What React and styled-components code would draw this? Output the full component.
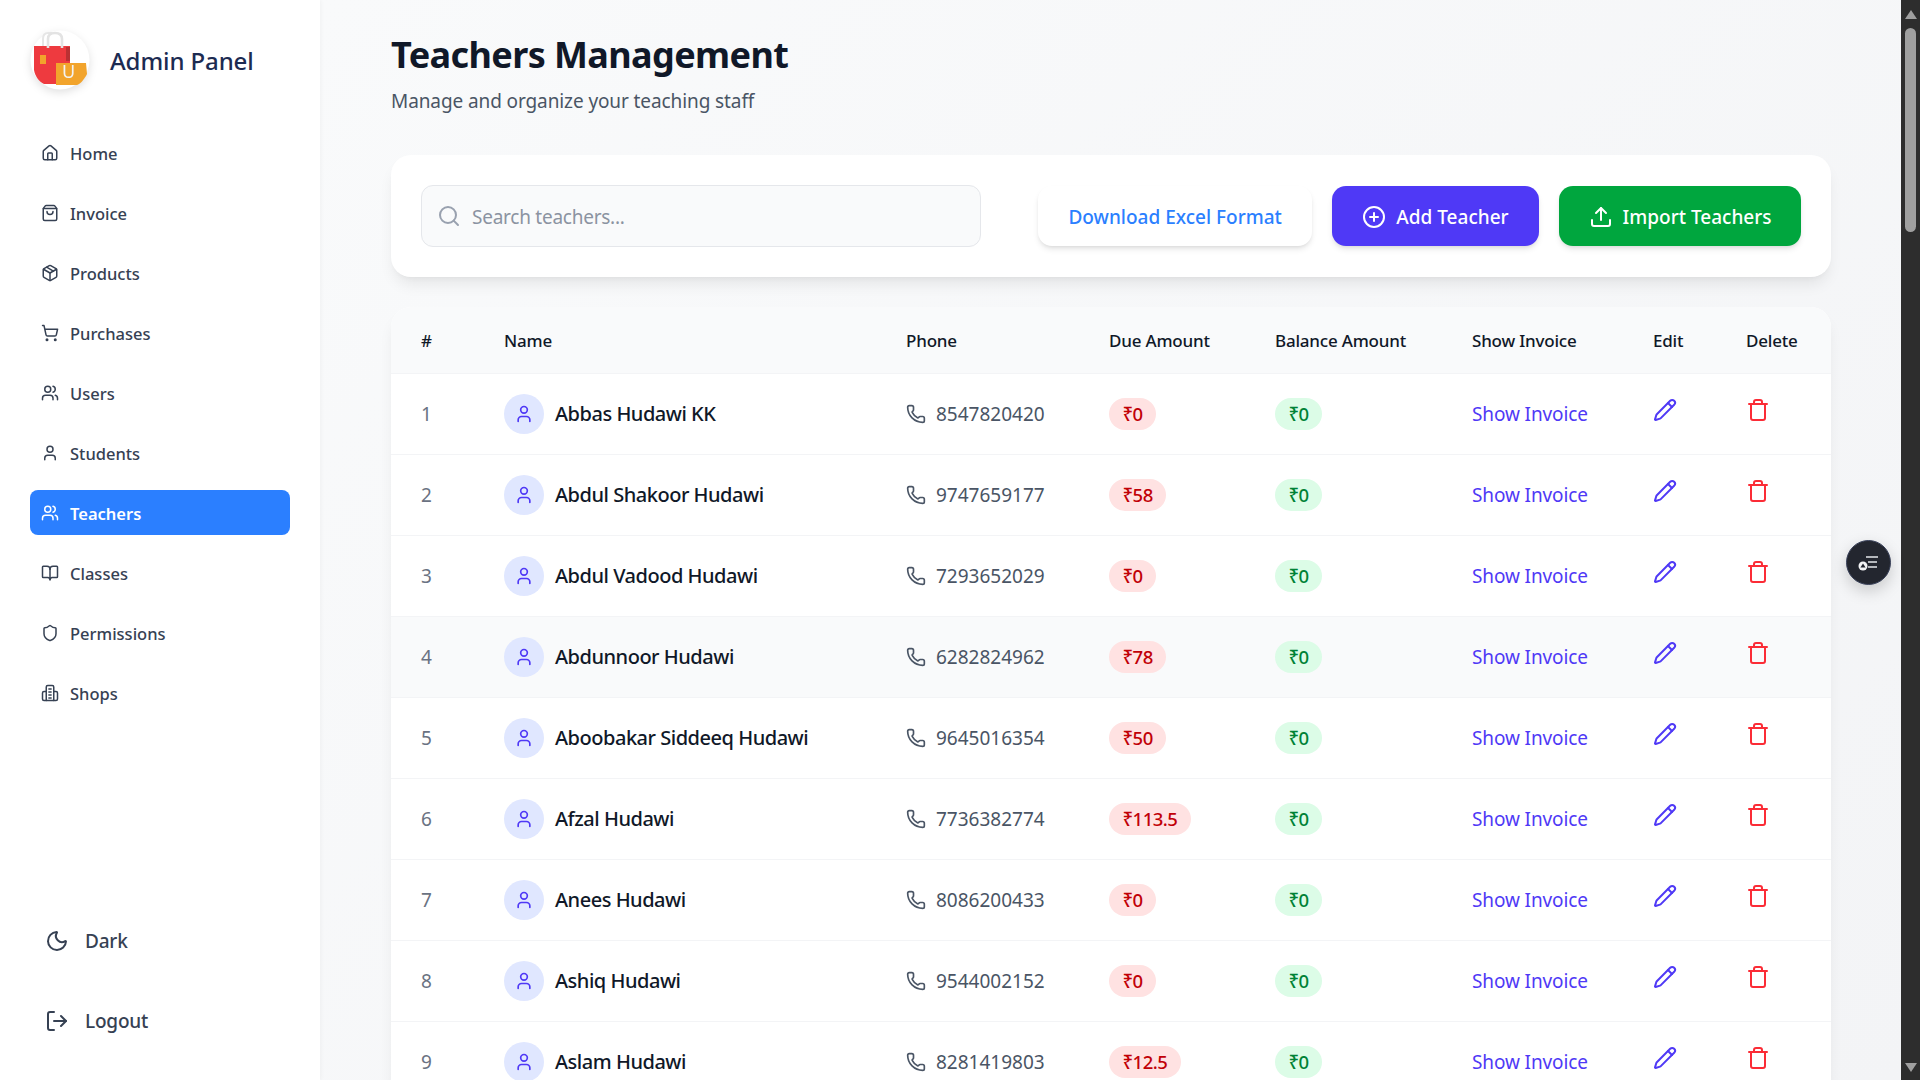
import React from 'react';
import styled, { createGlobalStyle } from 'styled-components';
import {
  House, ShoppingBag, Package, ShoppingCart, Users, User, BookOpen, Shield,
  Moon, LogOut, Search, CirclePlus, Upload, Phone, Pencil, Trash,
} from 'lucide-react';

const FONT = '"Noto Sans", "Open Sans", "DejaVu Sans", sans-serif';

const GlobalStyle = createGlobalStyle`
  html, body { margin: 0; padding: 0; height: 100%; overflow: hidden; }
  body { font-family: ${FONT}; color: #101828; background: #f9fafb; }
  * { box-sizing: border-box; }
`;

const Shell = styled.div`
  display: flex;
  width: 100vw;
  height: 100vh;
  overflow: hidden;
`;

const Sidebar = styled.aside`
  flex: 0 0 320px;
  display: flex;
  flex-direction: column;
  background: #fff;
  box-shadow: 1px 0 4px rgba(0, 0, 0, 0.04);
  z-index: 1;
`;

const Brand = styled.div`
  display: flex;
  align-items: center;
  gap: 20px;
  padding: 30px 30px 40px;
`;

const BrandTitle = styled.span`
  padding-top: 1px;
  font-size: 24px;
  font-weight: 500;
  letter-spacing: -0.1px;
  color: #1c2b52;
`;

const NavList = styled.nav`
  display: flex;
  flex-direction: column;
  gap: 15px;
  padding: 0 30px;
`;

const NavItem = styled.a`
  display: flex;
  align-items: center;
  gap: 11px;
  height: 45px;
  padding: 1px 11px 0;
  border-radius: 8px;
  font-size: 16.5px;
  font-weight: ${(p) => (p.$active ? 600 : 500)};
  color: ${(p) => (p.$active ? '#fff' : '#364153')};
  background: ${(p) => (p.$active ? '#2b7fff' : 'transparent')};
`;

const SideFooter = styled.div`
  margin-top: auto;
  display: flex;
  flex-direction: column;
  gap: 40px;
  padding: 0 45px 39px;
`;

const FooterItem = styled.a`
  display: flex;
  align-items: center;
  gap: 16px;
  height: 40px;
  font-size: 19px;
  font-weight: 500;
  letter-spacing: -0.2px;
  color: #364153;
`;

const Main = styled.main`
  flex: 1;
  min-width: 0;
  height: 100%;
  overflow: hidden;
  padding: 30px 70px 0 71px;
  background: linear-gradient(135deg, #f9fafb, #f3f4f6);
`;

const Title = styled.h1`
  margin: 0 0 8px;
  font-size: 36px;
  line-height: 50px;
  font-weight: 700;
  letter-spacing: -0.6px;
  color: #101828;
`;

const Subtitle = styled.p`
  margin: 0 0 41px;
  font-size: 19px;
  line-height: 26px;
  letter-spacing: -0.1px;
  color: #4a5565;
`;

const Toolbar = styled.section`
  display: flex;
  align-items: center;
  justify-content: space-between;
  height: 122px;
  padding: 0 30px;
  background: #fff;
  border-radius: 20px;
  box-shadow: 0 10px 15px -3px rgba(0, 0, 0, 0.08), 0 4px 6px -4px rgba(0, 0, 0, 0.06);
`;

const SearchBox = styled.label`
  display: flex;
  align-items: center;
  gap: 11px;
  width: 560px;
  height: 62px;
  padding: 0 15px;
  background: #f9fafb;
  border: 1px solid #e5e7eb;
  border-radius: 12px;
  color: #99a1af;
`;

const SearchInput = styled.input`
  flex: 1;
  min-width: 0;
  padding: 2px 0 0;
  border: 0;
  outline: 0;
  background: transparent;
  font-family: ${FONT};
  font-size: 19px;
  letter-spacing: -0.25px;
  color: #101828;
  &::placeholder { color: #8b93a1; opacity: 1; }
`;

const Actions = styled.div`
  display: flex;
  gap: 20px;
`;

const ActionButton = styled.button`
  display: flex;
  align-items: center;
  gap: 10px;
  height: 60px;
  padding: 1px ${(p) => p.$pad || 30}px 0;
  border: 0;
  border-radius: 14px;
  font-family: ${FONT};
  font-size: 19px;
  font-weight: 500;
  color: ${(p) => p.$fg};
  background: ${(p) => p.$bg};
  box-shadow: 0 4px 6px -1px rgba(0, 0, 0, 0.1), 0 2px 4px -2px rgba(0, 0, 0, 0.1);
`;

const TableCard = styled.section`
  margin-top: 30px;
  background: #fff;
  border-radius: 20px 20px 0 0;
  box-shadow: 0 10px 15px -3px rgba(0, 0, 0, 0.08);
  overflow: hidden;
`;

const Table = styled.table`
  width: 100%;
  table-layout: fixed;
  border-collapse: collapse;
`;

const HeadRow = styled.tr`
  height: 66px;
  background: #f9fafb;
  border-bottom: 1px solid #f3f4f6;
`;

const HeadCell = styled.th`
  padding: 1px 0 0 30px;
  text-align: left;
  font-size: 17px;
  font-weight: 500;
  letter-spacing: -0.2px;
  white-space: nowrap;
  color: #101828;
`;

const BodyRow = styled.tr`
  height: 81px;
  border-bottom: 1px solid #f3f4f6;
  background: ${(p) => (p.$hover ? '#f9fafb' : '#fff')};
`;

const Cell = styled.td`
  padding: 0 0 0 30px;
  vertical-align: middle;
  white-space: nowrap;
  font-size: 19px;
  color: ${(p) => p.$fg || '#4a5565'};
`;

const NameWrap = styled.div`
  display: flex;
  align-items: center;
  gap: 11px;
  font-size: 20px;
  font-weight: 500;
  letter-spacing: -0.48px;
  color: #101828;
`;

const Avatar = styled.span`
  display: flex;
  align-items: center;
  justify-content: center;
  width: 40px;
  height: 40px;
  border-radius: 50%;
  background: #e0e7ff;
  color: #4f39f6;
`;

const PhoneWrap = styled.div`
  display: flex;
  align-items: center;
  gap: 10px;
`;

const Pill = styled.span`
  display: inline-block;
  height: 32px;
  padding: 0 13.5px;
  border-radius: 16px;
  font-size: 18.5px;
  line-height: 32px;
  font-weight: 500;
  letter-spacing: -0.5px;
  color: ${(p) => (p.$tone === 'red' ? '#c10007' : '#008236')};
  background: ${(p) => (p.$tone === 'red' ? '#ffe2e2' : '#dcfce7')};
`;

const InvoiceLink = styled.a`
  font-size: 19px;
  letter-spacing: -0.12px;
  color: #4f39f6;
`;

const IconAction = styled.span`
  display: block;
  width: 24px;
  height: 24px;
  margin-bottom: 8px;
  color: ${(p) => p.$fg};
`;

const ScrollTrack = styled.div`
  flex: 0 0 19px;
  display: flex;
  flex-direction: column;
  align-items: center;
  height: 100%;
  background: #2d2d2d;
`;

const ArrowUp = styled.span`
  width: 0;
  height: 0;
  margin-top: 10px;
  border-left: 6px solid transparent;
  border-right: 6px solid transparent;
  border-bottom: 9px solid #9f9f9f;
`;

const Thumb = styled.span`
  width: 11px;
  height: 204px;
  margin-top: 9px;
  border-radius: 6px;
  background: #9f9f9f;
`;

const ArrowDown = styled.span`
  width: 0;
  height: 0;
  margin-top: auto;
  margin-bottom: 8px;
  border-left: 6px solid transparent;
  border-right: 6px solid transparent;
  border-top: 9px solid #9f9f9f;
`;

const FloatButton = styled.button`
  position: fixed;
  top: 540px;
  right: 29px;
  display: flex;
  align-items: center;
  justify-content: center;
  width: 45px;
  height: 45px;
  padding: 0;
  border: 1px solid #39415a;
  border-radius: 50%;
  background: #23262f;
  box-shadow: 0 6px 16px rgba(0, 0, 0, 0.18);
  z-index: 3;
`;

const ShopsIcon = (props) => (
  <svg width="18" height="18" viewBox="0 0 24 24" fill="none" stroke="currentColor" strokeWidth="2" strokeLinecap="round" strokeLinejoin="round" {...props}>
    <path d="M7 22V4a2 2 0 0 1 2-2h6a2 2 0 0 1 2 2v18" />
    <path d="M7 10H4a2 2 0 0 0-2 2v8a2 2 0 0 0 2 2h16a2 2 0 0 0 2-2v-8a2 2 0 0 0-2-2h-3" />
    <path d="M10.5 6.5h3M10.5 10.5h3M10.5 14.5h3M10.5 18.5h3" />
  </svg>
);

const LogoMark = () => (
  <svg width="60" height="60" viewBox="0 0 60 60" style={{ filter: 'drop-shadow(0 3px 4px rgba(0,0,0,0.12))' }}>
    <circle cx="30" cy="30" r="29.5" fill="#fff" />
    <path d="M13 20 V9 Q13 3 18 3 H22" fill="none" stroke="#e6e6e6" strokeWidth="2" />
    <path d="M4 16 H40 V54 H14 C9 52 5 46 4 40 Z" fill="#ee3a3f" />
    <path d="M18 18 V9 Q18 3 25 3 Q32 3 32 9 V18" fill="none" stroke="#e3e3e3" strokeWidth="2.6" />
    <path d="M36 17 h4 v14 h-4 z" fill="#8f2a2a" opacity="0.55" />
    <path d="M10 25 h6 v9 h-6 z" fill="#f2a42c" />
    <path d="M26 33 H56 L57 44 C54 50 50 54 47 55 H26 Z" fill="#f2a42c" />
    <text x="38.5" y="48" textAnchor="middle" fontFamily={FONT} fontSize="18" fill="#f3f3f3">U</text>
  </svg>
);

const FloatGlyph = () => (
  <svg width="24" height="20" viewBox="0 0 24 20" fill="none">
    <path d="M9 4h12M11 9h9M11 14h9" stroke="#e5e7eb" strokeWidth="1.6" />
    <circle cx="6" cy="13" r="4.5" fill="#f3f4f6" />
    <path d="M6 10.6l2.6 4H3.4z" fill="#23262f" />
  </svg>
);

const navItems = [
  ['Home', House], ['Invoice', ShoppingBag], ['Products', Package], ['Purchases', ShoppingCart],
  ['Users', Users], ['Students', User], ['Teachers', Users, true], ['Classes', BookOpen],
  ['Permissions', Shield], ['Shops', ShopsIcon],
];

const teachers = [
  ['Abbas Hudawi KK', '8547820420', '0'],
  ['Abdul Shakoor Hudawi', '9747659177', '58'],
  ['Abdul Vadood Hudawi', '7293652029', '0'],
  ['Abdunnoor Hudawi', '6282824962', '78'],
  ['Aboobakar Siddeeq Hudawi', '9645016354', '50'],
  ['Afzal Hudawi', '7736382774', '113.5'],
  ['Anees Hudawi', '8086200433', '0'],
  ['Ashiq Hudawi', '9544002152', '0'],
  ['Aslam Hudawi', '8281419803', '12.5'],
];

const columns = [
  ['#', 83], ['Name', 402], ['Phone', 203], ['Due Amount', 166], ['Balance Amount', 197],
  ['Show Invoice', 181], ['Edit', 93], ['Delete', 115],
];

export default function App() {
  return (
    <Shell>
      <GlobalStyle />
      <Sidebar>
        <Brand>
          <LogoMark />
          <BrandTitle>Admin Panel</BrandTitle>
        </Brand>
        <NavList>
          {navItems.map(([label, Icon, active]) => (
            <NavItem key={label} $active={active}>
              <Icon size={18} width={18} height={18} strokeWidth={2} />
              {label}
            </NavItem>
          ))}
        </NavList>
        <SideFooter>
          <FooterItem><Moon size={24} />Dark</FooterItem>
          <FooterItem><LogOut size={24} />Logout</FooterItem>
        </SideFooter>
      </Sidebar>
      <Main>
        <Title>Teachers Management</Title>
        <Subtitle>Manage and organize your teaching staff</Subtitle>
        <Toolbar>
          <SearchBox>
            <Search size={24} />
            <SearchInput placeholder="Search teachers..." />
          </SearchBox>
          <Actions>
            <ActionButton $bg="#fff" $fg="#2b7fff">Download Excel Format</ActionButton>
            <ActionButton $bg="#4f39f6" $fg="#fff" $pad={30.5}><CirclePlus size={24} />Add Teacher</ActionButton>
            <ActionButton $bg="#00a63e" $fg="#fff" $pad={29.5}><Upload size={24} />Import Teachers</ActionButton>
          </Actions>
        </Toolbar>
        <TableCard>
          <Table>
            <colgroup>
              {columns.map(([label, width]) => <col key={label} width={width} />)}
            </colgroup>
            <thead>
              <HeadRow>
                {columns.map(([label]) => <HeadCell key={label}>{label}</HeadCell>)}
              </HeadRow>
            </thead>
            <tbody>
              {teachers.map(([name, phone, due], i) => (
                <BodyRow key={name} $hover={i === 3}>
                  <Cell $fg="#6a7282">{i + 1}</Cell>
                  <Cell>
                    <NameWrap>
                      <Avatar><User size={20} /></Avatar>
                      {name}
                    </NameWrap>
                  </Cell>
                  <Cell>
                    <PhoneWrap><Phone size={20} />{phone}</PhoneWrap>
                  </Cell>
                  <Cell><Pill $tone="red">₹{due}</Pill></Cell>
                  <Cell><Pill $tone="green">₹0</Pill></Cell>
                  <Cell><InvoiceLink>Show Invoice</InvoiceLink></Cell>
                  <Cell><IconAction $fg="#4f39f6"><Pencil size={24} /></IconAction></Cell>
                  <Cell><IconAction $fg="#fb2c36"><Trash size={24} /></IconAction></Cell>
                </BodyRow>
              ))}
            </tbody>
          </Table>
        </TableCard>
      </Main>
      <ScrollTrack>
        <ArrowUp />
        <Thumb />
        <ArrowDown />
      </ScrollTrack>
      <FloatButton aria-label="Accessibility"><FloatGlyph /></FloatButton>
    </Shell>
  );
}
